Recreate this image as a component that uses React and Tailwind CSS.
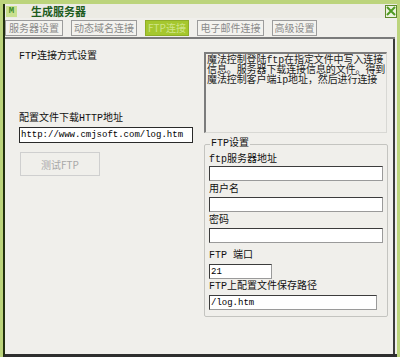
import React from "react";

const FONT = { fontFamily: '"Liberation Mono", "Noto Sans CJK SC", monospace' };

const tabs = [
  { label: "服务器设置", w: "w-[58px]" },
  { label: "动态域名连接", w: "w-[66px]" },
  { label: "FTP连接", w: "w-[44px]", active: true },
  { label: "电子邮件连接", w: "w-[67px]" },
  { label: "高级设置", w: "w-[45px]" },
];

const note = [
  "魔法控制登陆ftp在指定文件中写入连接",
  "信息。服务器下载连接信息的文件。得到",
  "魔法控制客户端ip地址，然后进行连接",
];

function Field({ value = "", className = "" }) {
  return (
    <div
      className={`h-[15px] bg-white border border-[#3c3c3c] border-r-[#9a9a9a] border-b-[#9a9a9a] flex items-center pl-[1px] text-[9px] leading-[10px] text-black ${className}`}
    >
      {value}
    </div>
  );
}

function Label({ children, className = "" }) {
  return <div className={`text-[10px] leading-[10px] text-[#111] ${className}`}>{children}</div>;
}

export default function App() {
  return (
    <div className="w-[400px] h-[357px] bg-[#bcd47c] overflow-hidden flex flex-col" style={FONT}>
      <div className="h-[4px] shrink-0" />
      <div className="flex-1 ml-[3px] mr-[3px] border-l-2 border-[#22300f] border-b-[3px] border-b-[#2e2e2e] bg-[#f0efeb] flex flex-col">
        {/* title bar */}
        <div className="h-[14px] shrink-0 bg-[#ecebe4] flex items-center">
          <span className="ml-[1px] w-[11px] h-[11px] bg-[#c9e08e] text-[#3c8a2a] text-[9px] leading-[11px] font-bold flex items-center justify-center">
            M
          </span>
          <span
            className="ml-[14px] text-[11px] leading-[12px] font-bold text-[#1d5c1d]"
            style={{ fontFamily: '"Noto Sans CJK SC", sans-serif' }}
          >
            生成服务器
          </span>
          <span className="ml-auto w-[12px] h-[13px] border border-[#5f8a2a] bg-[#eef3e0] flex items-center justify-center">
            <svg width="10" height="10" viewBox="0 0 10 10">
              <path d="M1 1 L9 9 M9 1 L1 9" stroke="#4f9a22" strokeWidth="2" />
            </svg>
          </span>
        </div>

        {/* tabs */}
        <div className="h-[19px] shrink-0 flex items-start pt-[2px] gap-[8px] bg-[#f0efeb]">
          {tabs.map((t) => (
            <div
              key={t.label}
              className={`${t.w} h-[16px] flex items-center justify-center text-[10px] leading-[10px] border ${
                t.active
                  ? "bg-[#a5c72e] border-[#8fae26] text-[#cfe58a]"
                  : "bg-[#f3f2ee] border-[#9c9c9c] text-[#8a8a8a]"
              }`}
              style={{ fontFamily: '"Noto Sans CJK SC", sans-serif' }}
            >
              {t.label}
            </div>
          ))}
        </div>
        <div className="h-[2px] shrink-0 bg-[#7a7a7a] mr-[2px]" />

        {/* content */}
        <div className="flex-1 mr-[2px] border-r-2 border-[#3a3a3a] flex pl-[14px] gap-[11px]">
          <div className="w-[174px] flex flex-col">
            <Label className="mt-[13px]">FTP连接方式设置</Label>
            <Label className="mt-[52px]">配置文件下载HTTP地址</Label>
            <div className="mt-[3px] h-[16px] bg-white border border-[#2a2a2a] flex items-center pl-[1px] text-[9px] leading-[10px] text-black">
              http://www.cmjsoft.com/log.htm
            </div>
            <button
              className="mt-[9px] ml-[1px] w-[80px] h-[24px] border border-[#cfcfcf] bg-[#f0efeb] text-[10px] text-[#a8a8a8] flex items-center justify-center"
              style={{ fontFamily: '"Noto Sans CJK SC", sans-serif' }}
            >
              测试FTP
            </button>
          </div>

          <div className="w-[184px] flex flex-col">
            <div className="mt-[13px] w-[183px] h-[81px] border-t-2 border-l-2 border-[#7c7c7c] border-r border-b border-r-[#d8d8d4] border-b-[#d8d8d4] pl-[1px] pt-[2px] text-[10px] leading-[10px] text-[#222] whitespace-nowrap">
              {note.map((line) => (
                <div key={line} className="tracking-[-0.1px]">{line}</div>
              ))}
            </div>

            <fieldset className="mt-[6px] w-[184px] border border-[#c4c4c0] rounded-[2px] px-[4px] pb-[6px]">
              <legend className="ml-[1px] px-[1px] text-[10px] leading-[10px] text-[#111]">FTP设置</legend>
              <Label className="mt-[6px]">ftp服务器地址</Label>
              <Field className="mt-[1px] w-[174px]" />
              <Label className="mt-[4px]">用户名</Label>
              <Field className="mt-[2px] w-[174px]" />
              <Label className="mt-[4px]">密码</Label>
              <Field className="mt-[2px] w-[174px]" />
              <Label className="mt-[8px]">FTP 端口</Label>
              <Field className="mt-[3px] w-[63px]" value="21" />
              <Label className="mt-[3px]">FTP上配置文件保存路径</Label>
              <Field className="mt-[3px] w-[168px]" value="/log.htm" />
            </fieldset>
          </div>
        </div>
      </div>
    </div>
  );
}
